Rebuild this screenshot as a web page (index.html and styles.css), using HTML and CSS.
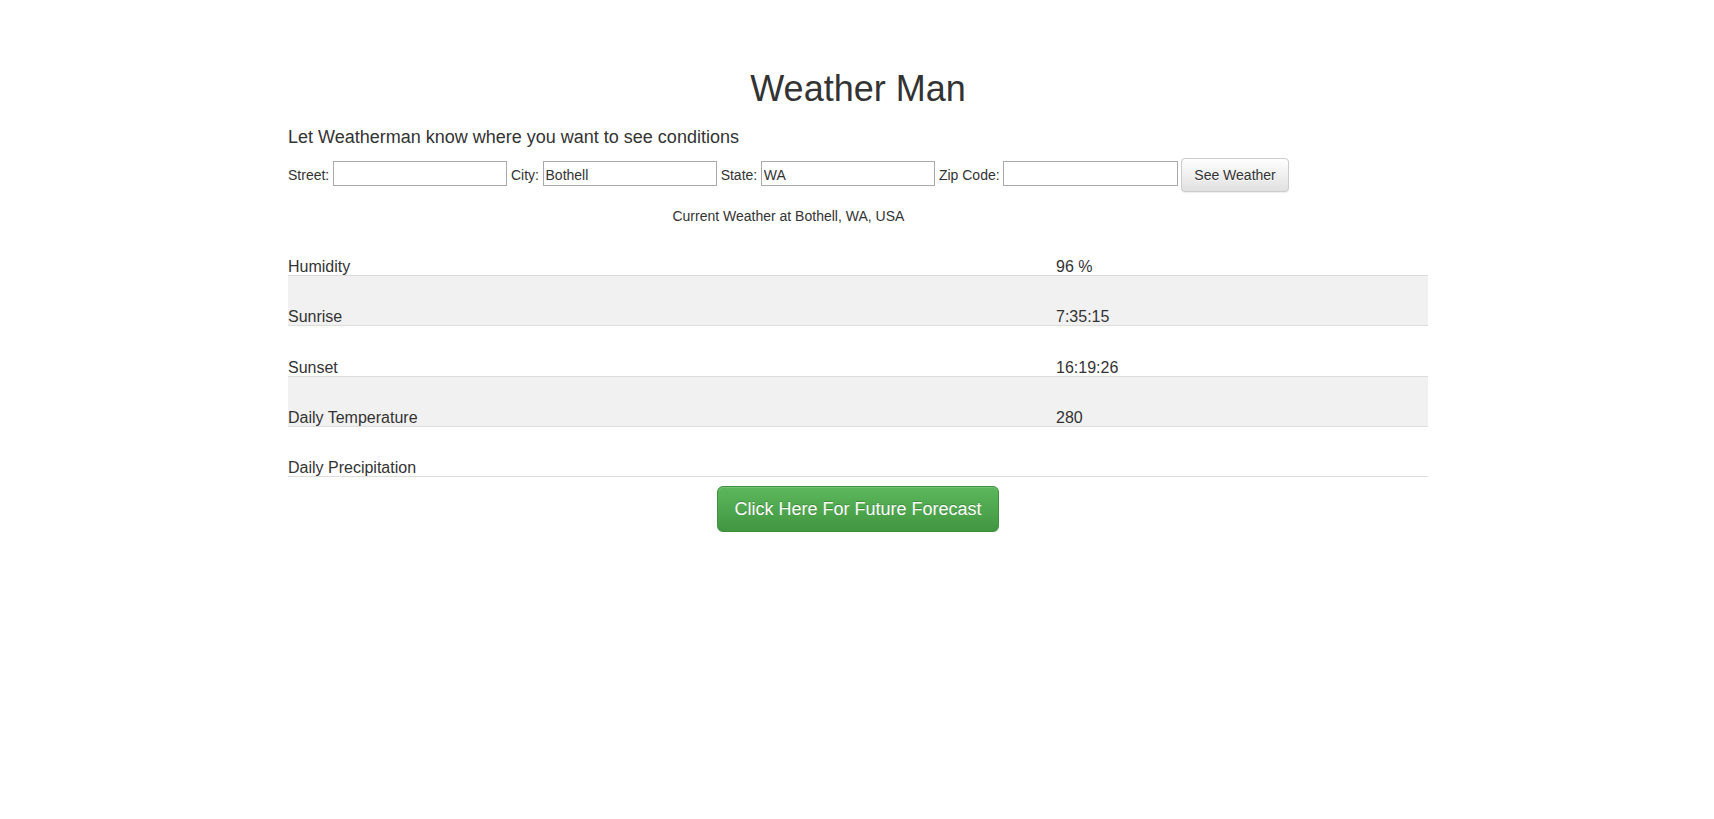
FILE: index.html
```html
<!DOCTYPE html>
<html lang="en">
<head>
<meta charset="utf-8">
<title>Weather Man</title>
<link rel="stylesheet" href="styles.css">
</head>
<body>
<div class="container">
  <h1 class="title">Weather Man</h1>
  <h4 class="subtitle">Let Weatherman know where you want to see conditions</h4>
  <div class="search-block">
    <form class="search-form">
      <label class="field-label" for="street">Street:</label>
      <input class="field-input" id="street" type="text" value="">
      <label class="field-label" for="city">City:</label>
      <input class="field-input" id="city" type="text" value="Bothell">
      <label class="field-label" for="state">State:</label>
      <input class="field-input" id="state" type="text" value="WA">
      <label class="field-label" for="zip">Zip Code:</label>
      <input class="field-input" id="zip" type="text" value="">
      <button class="btn btn-default" type="button">See Weather</button>
    </form>
    <div class="location-caption">Current Weather at Bothell, WA, USA</div>
  </div>
  <table class="weather-table">
    <colgroup><col class="col-label"><col class="col-value"></colgroup>
    <tbody>
      <tr><td>Humidity</td><td>96 %</td></tr>
      <tr><td>Sunrise</td><td>7:35:15</td></tr>
      <tr><td>Sunset</td><td>16:19:26</td></tr>
      <tr><td>Daily Temperature</td><td>280</td></tr>
      <tr><td>Daily Precipitation</td><td></td></tr>
    </tbody>
  </table>
  <div class="forecast-row">
    <button class="btn btn-success btn-lg" type="button">Click Here For Future Forecast</button>
  </div>
</div>
</body>
</html>
```
FILE: styles.css
```css
* { box-sizing: border-box; }

body {
  margin: 0;
  font-family: "Liberation Sans", Arial, Helvetica, sans-serif;
  font-size: 14px;
  line-height: 1.42857;
  color: #333;
  background: #fff;
}

.container {
  width: 1142px;
  margin: 0 auto;
  padding-left: 2px;
}

.title {
  margin: 69px 0 0;
  font-size: 36px;
  font-weight: 500;
  line-height: 1.1;
  text-align: center;
}

.subtitle {
  margin: 19px 0 0;
  font-size: 18px;
  font-weight: 500;
  line-height: 1.1;
}

.search-block {
  width: fit-content;
}

.search-form {
  display: flex;
  align-items: baseline;
  gap: 3.6px;
  margin-top: 11px;
}

.field-label {
  line-height: 20px;
}

.field-input {
  width: 174.5px;
  height: 25px;
  padding: 3px 2px 0;
  border: 1px solid #a9a9a9;
  font-family: "Liberation Sans", Arial, sans-serif;
  font-size: 14px;
  color: #333;
  background: #fff;
}

.btn {
  display: inline-block;
  font-family: "Liberation Sans", Arial, sans-serif;
  font-weight: 400;
  text-align: center;
  white-space: nowrap;
  cursor: pointer;
  border: 1px solid transparent;
}

.btn-default {
  padding: 6px 12px;
  font-size: 14px;
  line-height: 20px;
  border-radius: 4px;
  color: #333;
  border-color: #ccc;
  background-image: linear-gradient(to bottom, #fff 0, #e0e0e0 100%);
  text-shadow: 0 1px 0 #fff;
  box-shadow: inset 0 1px 0 rgba(255,255,255,.15), 0 1px 1px rgba(0,0,0,.075);
}

.location-caption {
  margin-top: 14px;
  text-align: center;
  line-height: 20px;
}

.weather-table {
  width: 100%;
  border-collapse: collapse;
  border-spacing: 0;
  margin-top: -1px;
}

.col-label { width: 768px; }

.weather-table td {
  height: 50.25px;
  padding: 0;
  vertical-align: bottom;
  font-size: 16px;
  line-height: 16px;
  border-bottom: 1px solid #ddd;
}

.weather-table tr:nth-child(even) td {
  background: #f1f1f1;
}

.forecast-row {
  display: flex;
  justify-content: center;
  margin-top: 9px;
}

.btn-lg {
  padding: 10px 16px;
  font-size: 18px;
  line-height: 24px;
  border-radius: 6px;
}

.btn-success {
  color: #fff;
  border-color: #3e8f3e;
  background-image: linear-gradient(to bottom, #5cb85c 0, #419641 100%);
  text-shadow: 0 -1px 0 rgba(0,0,0,.2);
  box-shadow: inset 0 1px 0 rgba(255,255,255,.15), 0 1px 1px rgba(0,0,0,.075);
}
```
